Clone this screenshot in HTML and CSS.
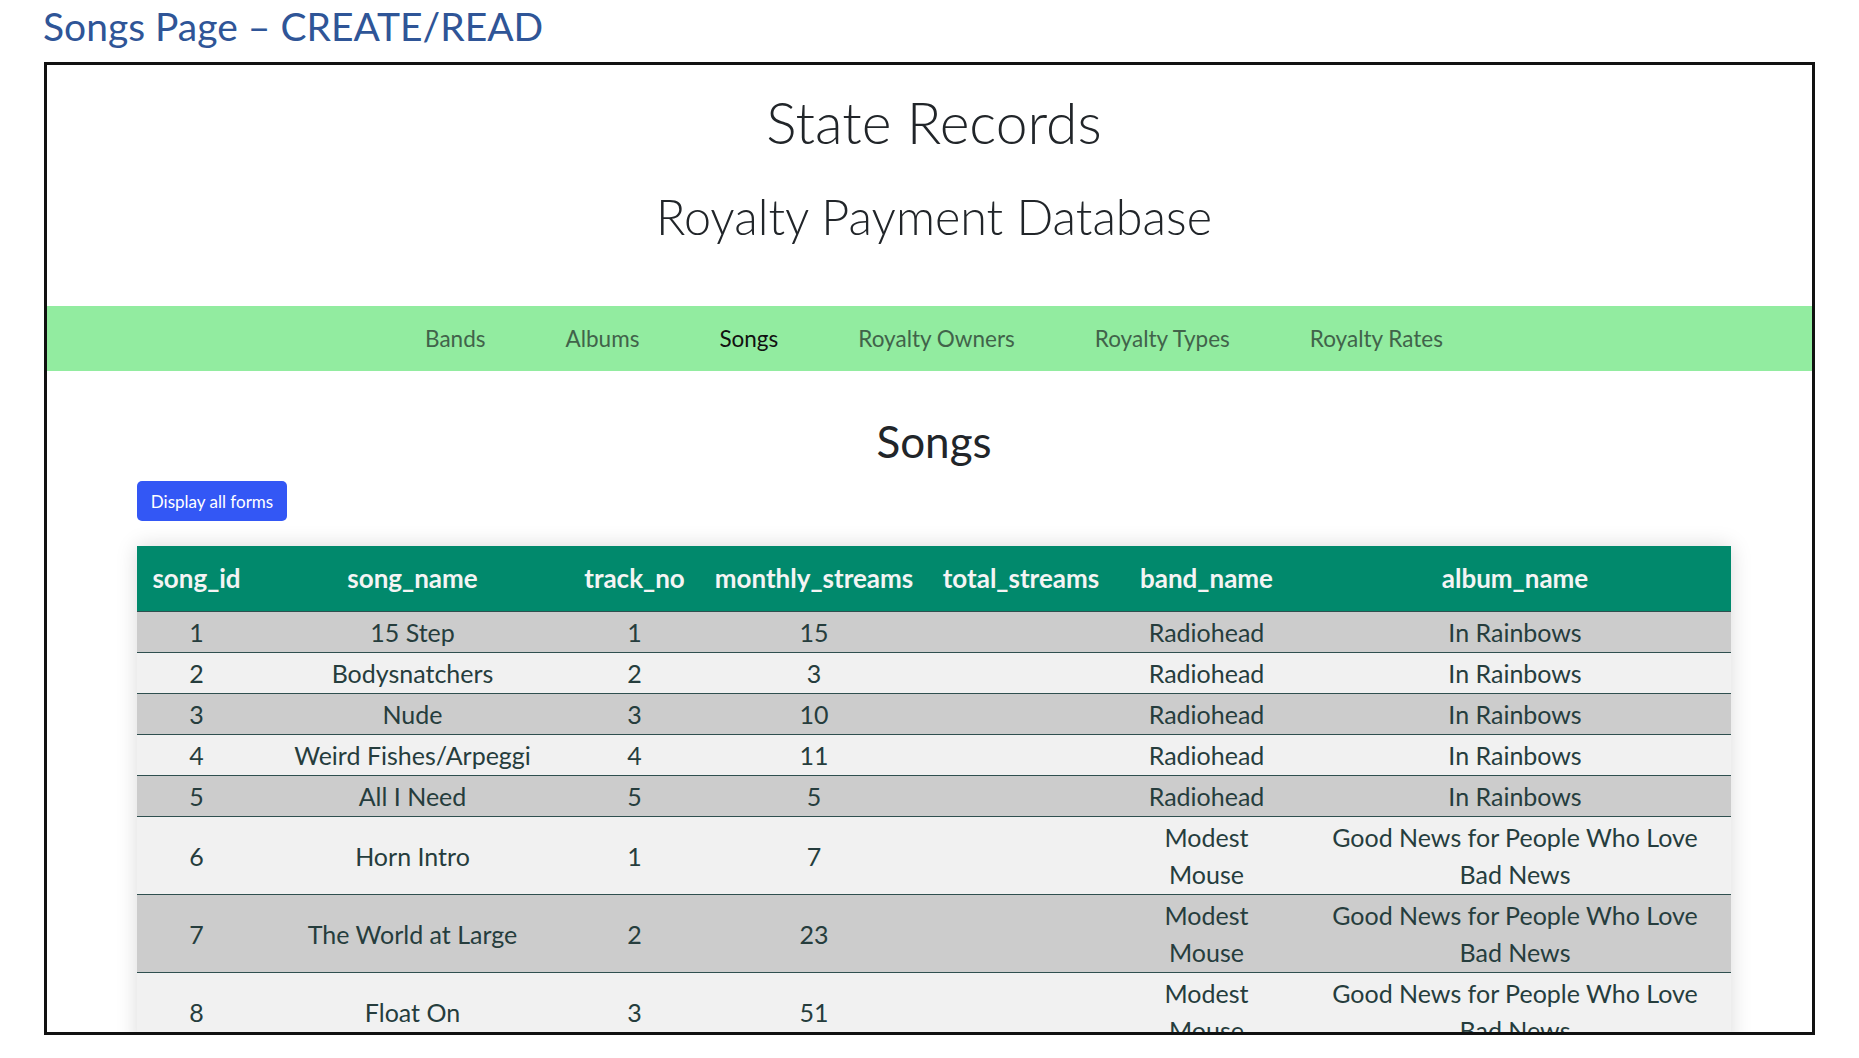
FILE: index.html
```html
<!DOCTYPE html>
<html lang="en">
<head>
<meta charset="utf-8">
<title>Songs Page – CREATE/READ</title>
<link rel="stylesheet" href="styles.css">
</head>
<body>
<h1 class="slide-title">Songs Page – CREATE/READ</h1>
<div class="frame">
  <div class="page">
    <header class="site-header">
      <h1 class="brand">State Records</h1>
      <h2 class="tagline">Royalty Payment Database</h2>
    </header>
    <nav class="nav">
      <a class="nav-link">Bands</a>
      <a class="nav-link">Albums</a>
      <a class="nav-link active">Songs</a>
      <a class="nav-link">Royalty Owners</a>
      <a class="nav-link">Royalty Types</a>
      <a class="nav-link">Royalty Rates</a>
    </nav>
    <main class="content">
      <h2 class="section-title">Songs</h2>
      <button class="btn">Display all forms</button>
      <table class="data-table">
        <colgroup>
          <col class="c-id"><col class="c-name"><col class="c-track"><col class="c-monthly"><col class="c-total"><col class="c-band"><col class="c-album">
        </colgroup>
        <thead>
          <tr><th>song_id</th><th>song_name</th><th>track_no</th><th>monthly_streams</th><th>total_streams</th><th class="band">band_name</th><th class="album">album_name</th></tr>
        </thead>
        <tbody>
          <tr><td>1</td><td>15 Step</td><td>1</td><td>15</td><td></td><td class="band">Radiohead</td><td class="album">In Rainbows</td></tr>
          <tr><td>2</td><td>Bodysnatchers</td><td>2</td><td>3</td><td></td><td class="band">Radiohead</td><td class="album">In Rainbows</td></tr>
          <tr><td>3</td><td>Nude</td><td>3</td><td>10</td><td></td><td class="band">Radiohead</td><td class="album">In Rainbows</td></tr>
          <tr><td>4</td><td>Weird Fishes/Arpeggi</td><td>4</td><td>11</td><td></td><td class="band">Radiohead</td><td class="album">In Rainbows</td></tr>
          <tr><td>5</td><td>All I Need</td><td>5</td><td>5</td><td></td><td class="band">Radiohead</td><td class="album">In Rainbows</td></tr>
          <tr><td>6</td><td>Horn Intro</td><td>1</td><td>7</td><td></td><td class="band">Modest Mouse</td><td class="album">Good News for People Who Love Bad News</td></tr>
          <tr><td>7</td><td>The World at Large</td><td>2</td><td>23</td><td></td><td class="band">Modest Mouse</td><td class="album">Good News for People Who Love Bad News</td></tr>
          <tr><td>8</td><td>Float On</td><td>3</td><td>51</td><td></td><td class="band">Modest Mouse</td><td class="album">Good News for People Who Love Bad News</td></tr>
        </tbody>
      </table>
    </main>
  </div>
</div>
</body>
</html>
```
FILE: styles.css
```css
body {
  margin: 0;
  background: #ffffff;
  font-family: Lato, "Liberation Sans", sans-serif;
}

.slide-title {
  margin: 0;
  height: 58px;
  padding: 4px 0 0 43px;
  font-size: 39px;
  line-height: 44px;
  font-weight: 400;
  color: #2f5597;
}

.frame {
  margin-left: 44px;
  width: 1765px;
  height: 967px;
  border: 3px solid #111111;
  overflow: hidden;
}

.page {
  width: 1774px;
}

.site-header {
  text-align: center;
  padding-top: 22px;
  color: #212529;
}

.brand {
  margin: 0;
  font-size: 57px;
  line-height: 70px;
  font-weight: 300;
}

.tagline {
  margin: 30px 0 0;
  font-size: 48.5px;
  line-height: 58px;
  font-weight: 300;
}

.nav {
  margin-top: 61px;
  height: 65px;
  background: #92eca0;
  display: flex;
  justify-content: center;
  align-items: center;
  gap: 80px;
}

.nav-link {
  font-size: 22.5px;
  line-height: 30px;
  color: #41634a;
}

.nav-link.active {
  color: #111111;
}

.content {
  padding: 0 90px;
}

.section-title {
  margin: 44px 0 0;
  text-align: center;
  font-size: 44px;
  line-height: 53px;
  font-weight: 400;
  color: #212529;
}

.btn {
  display: block;
  margin-top: 13px;
  height: 40px;
  width: 150px;
  padding: 0;
  border: none;
  border-radius: 5px;
  background: #3357f5;
  color: #ffffff;
  font-family: Lato, "Liberation Sans", sans-serif;
  font-size: 17px;
}

.data-table {
  margin-top: 25px;
  width: 1594px;
  table-layout: fixed;
  border-collapse: collapse;
  box-shadow: 0 0 20px rgba(0, 0, 0, 0.15);
  text-align: center;
}

.c-id { width: 119px; }
.c-name { width: 313px; }
.c-track { width: 131px; }
.c-monthly { width: 228px; }
.c-total { width: 186px; }
.c-band { width: 185px; }
.c-album { width: 432px; }

.data-table th {
  background: #01896c;
  color: #f4f4f4;
  font-size: 26px;
  font-weight: 700;
  line-height: 37px;
  padding: 14px 4px;
  border-bottom: 1px solid #2f4f4f;
  white-space: nowrap;
}

.data-table td {
  font-size: 25px;
  line-height: 37px;
  padding: 2px 15px 1px;
  color: #263d3d;
  border-bottom: 1px solid #2f4f4f;
}

.data-table td.band {
  padding-left: 18px;
  padding-right: 18px;
}

.data-table td.album {
  padding-left: 20px;
  padding-right: 20px;
}

.data-table tbody tr:nth-child(odd) {
  background: #cccccc;
}

.data-table tbody tr:nth-child(even) {
  background: #f1f1f1;
}
```
